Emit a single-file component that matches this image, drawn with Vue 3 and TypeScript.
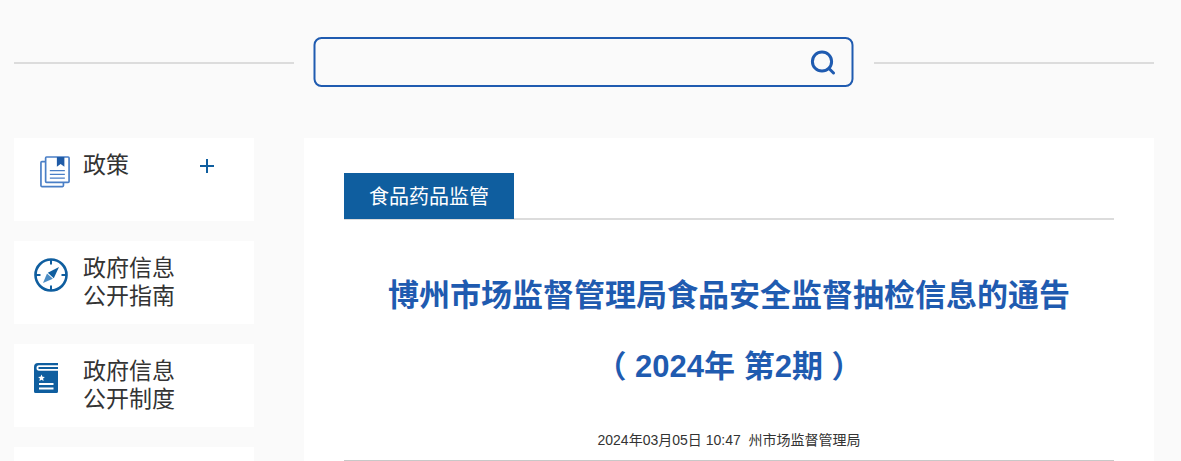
<script setup lang="ts">
interface NavItem {
  id: string
  lines: string[]
  expandable?: boolean
}

const navItems: NavItem[] = [
  { id: 'policy', lines: ['政策'], expandable: true },
  { id: 'guide', lines: ['政府信息', '公开指南'] },
  { id: 'system', lines: ['政府信息', '公开制度'] },
  { id: 'more', lines: [] }
]
</script>

<template>
  <div class="page">
    <div class="search-row">
      <span class="rule"></span>
      <div class="search-box">
        <input class="search-input" type="text" />
        <svg class="search-icon" width="26" height="26" viewBox="0 0 26 26" fill="none">
          <circle cx="12.5" cy="12.5" r="9.6" stroke="#1f5bb0" stroke-width="3" />
          <path d="M19.5 19.5 L24 24" stroke="#1f5bb0" stroke-width="3" stroke-linecap="round" />
        </svg>
      </div>
      <span class="rule"></span>
    </div>

    <div class="columns">
      <aside class="sidebar">
        <div v-for="item in navItems" :key="item.id" class="nav-card">
          <div class="nav-icon" :class="'icon-' + item.id">
            <svg v-if="item.id === 'policy'" width="30" height="32" viewBox="0 0 32 34" fill="none">
              <path d="M6 6 H2 Q1 6 1 7 V31.5 Q1 32.5 2 32.5 H24 Q25 32.5 25 31.5 V28" stroke="#4a7fc6" stroke-width="1.8" />
              <rect x="6" y="1" width="25" height="27" rx="1" fill="#fff" stroke="#4a7fc6" stroke-width="1.8" />
              <path d="M18 1 H26 V11.5 L22 8.5 L18 11.5 Z" fill="#1f5ba6" />
              <path d="M10.5 15.5 H26.5 M10.5 19.5 H26.5 M10.5 23.5 H26.5" stroke="#4a7fc6" stroke-width="1.5" />
            </svg>
            <svg v-else-if="item.id === 'guide'" width="34" height="34" viewBox="0 0 34 34" fill="none">
              <circle cx="17" cy="17" r="15.5" stroke="#0f5e9f" stroke-width="2.6" />
              <path d="M17 2 V6.5 M17 27.5 V32 M2 17 H6.5 M27.5 17 H32" stroke="#0f5e9f" stroke-width="2" />
              <path d="M25 9 L19.8 20.2 L13.8 14.8 Z" fill="#0f5e9f" />
              <path d="M9 25 L13 15.6 L18.9 20.8 Z" fill="#4a8cc4" />
            </svg>
            <svg v-else-if="item.id === 'system'" width="24" height="30" viewBox="0 0 24 30" fill="none">
              <path d="M4 0 H24 V2.2 H5 Q2.5 2.2 2.5 5 Q2.5 7.8 5 7.8 H24 V28.5 Q24 30 22.5 30 H1.5 Q0 30 0 28.5 V4 Q0 0 4 0 Z" fill="#0f5e9f" />
              <rect x="4.5" y="4" width="19.5" height="2" fill="#0f5e9f" />
              <path d="M7.5 11.5 L8.5 13.7 L10.9 14 L9.1 15.6 L9.6 18 L7.5 16.8 L5.4 18 L5.9 15.6 L4.1 14 L6.5 13.7 Z" fill="#fff" />
              <rect x="5" y="20" width="14.5" height="2" fill="#fff" />
              <rect x="5" y="24.5" width="14.5" height="2" fill="#fff" />
            </svg>
          </div>
          <div v-if="item.lines.length" class="nav-label">
            <div v-for="line in item.lines" :key="line">{{ line }}</div>
          </div>
          <span v-if="item.expandable" class="nav-plus"></span>
        </div>
      </aside>

      <main class="content">
        <div class="tab-bar">
          <span class="tab">食品药品监管</span>
        </div>
        <h1 class="title">
          <span>博州市场监督管理局食品安全监督抽检信息的通告</span>
          <span>（ 2024年 第2期 ）</span>
        </h1>
        <div class="meta">2024年03月05日 10:47&nbsp;&nbsp;州市场监督管理局</div>
      </main>
    </div>
  </div>
</template>

<style>
html,
body {
  margin: 0;
  background: #fafafa;
}
</style>

<style scoped>
.page {
  box-sizing: border-box;
  width: 1181px;
  height: 461px;
  overflow: hidden;
  padding: 37px 27px 0 14px;
  background: #fafafa;
  font-family: "Liberation Sans", "Noto Sans CJK SC", sans-serif;
}

.search-row {
  display: flex;
  align-items: center;
  gap: 20px;
  height: 50px;
}

.rule {
  flex: 1;
  height: 2px;
  margin-top: 2px;
  background: #dcdcdc;
}

.search-box {
  box-sizing: border-box;
  display: flex;
  align-items: center;
  width: 540px;
  height: 50px;
  padding: 0 16px 0 12px;
  border: 2px solid #1f5bb0;
  border-radius: 8px;
  transform: translateX(-0.5px);
}

.search-input {
  flex: 1;
  min-width: 0;
  border: 0;
  outline: 0;
  background: transparent;
}

.columns {
  display: flex;
  gap: 50px;
  margin-top: 51px;
}

.sidebar {
  display: flex;
  flex-direction: column;
  gap: 20px;
  width: 240px;
  flex: none;
}

.nav-card {
  position: relative;
  display: flex;
  height: 83px;
  flex: none;
  background: #fff;
  color: #333;
  font-size: 23px;
  line-height: 28px;
}

.nav-icon {
  box-sizing: border-box;
  width: 69px;
  flex: none;
  display: flex;
  align-items: flex-start;
  padding-left: 20px;
}

.icon-policy {
  padding: 18px 0 0 26px;
}

.icon-guide {
  padding-top: 17px;
}

.icon-system {
  padding-top: 19px;
}

.nav-label {
  padding-top: 13px;
}

.nav-plus {
  position: absolute;
  left: 186px;
  top: 21px;
  width: 14px;
  height: 14px;
  background:
    linear-gradient(#0f5e9f, #0f5e9f) center / 14px 2px no-repeat,
    linear-gradient(#0f5e9f, #0f5e9f) center / 2px 14px no-repeat;
}

.content {
  box-sizing: border-box;
  width: 850px;
  height: 400px;
  flex: none;
  padding: 35px 40px 0;
  background: #fff;
}

.tab-bar {
  display: flex;
  height: 47px;
  box-sizing: border-box;
  border-bottom: 2px solid #dcdcdc;
}

.tab {
  width: 170px;
  height: 46px;
  flex: none;
  background: #0f5e9f;
  color: #fff;
  font-size: 20px;
  line-height: 48px;
  text-align: center;
}

.title {
  display: flex;
  flex-direction: column;
  margin: 40px 0 0;
  color: #1f5bb0;
  font-size: 31px;
  font-weight: 700;
  line-height: 71px;
  text-align: center;
}

.meta {
  margin-top: 28px;
  padding-bottom: 10px;
  border-bottom: 1px solid #c8c8c8;
  color: #333;
  font-size: 14px;
  line-height: 20px;
  text-align: center;
}
</style>
